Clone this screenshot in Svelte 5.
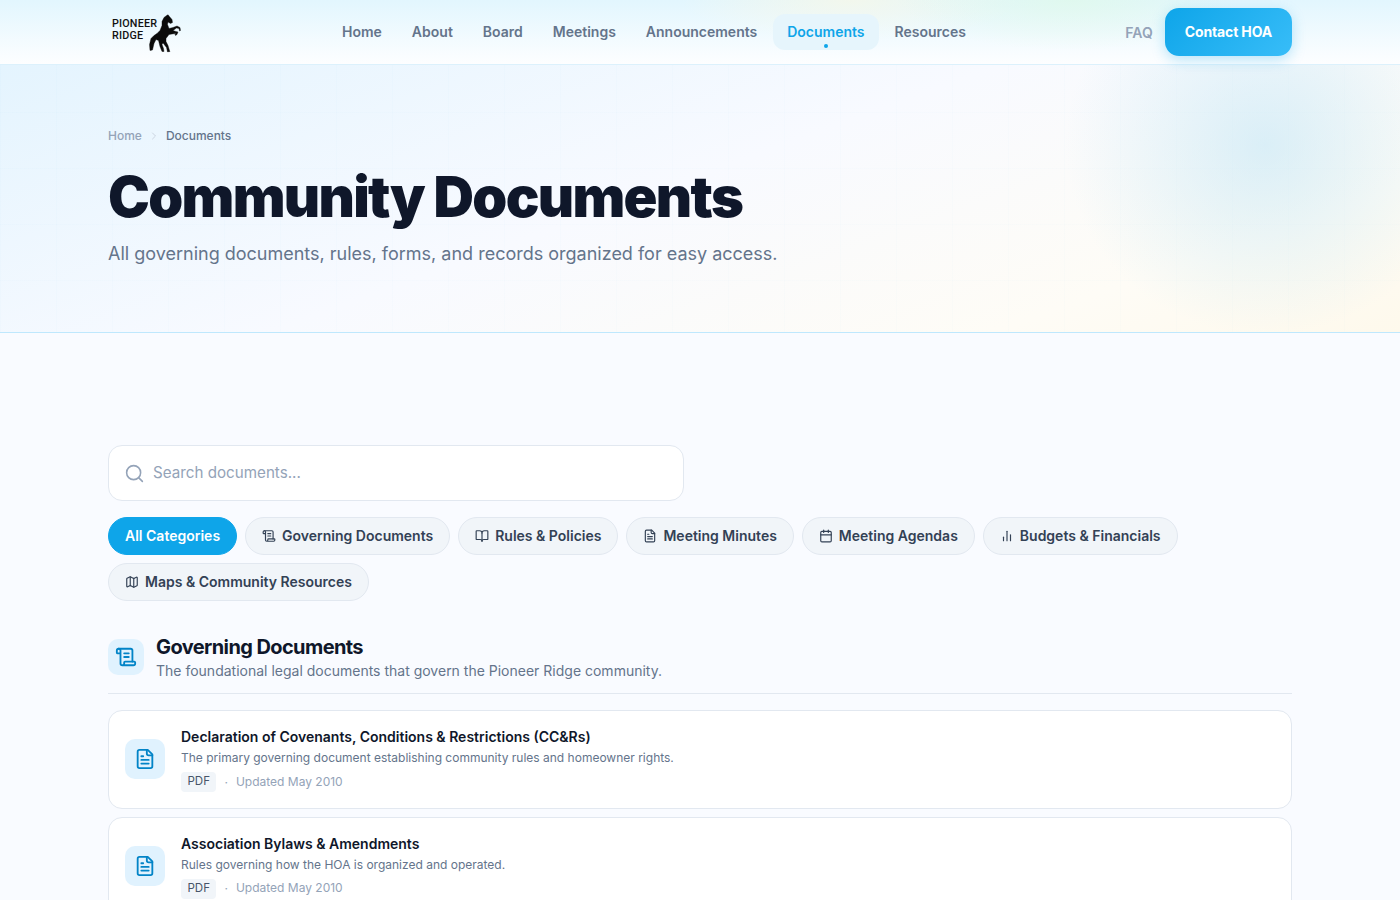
<script>
  const links = ['Home', 'About', 'Board', 'Meetings', 'Announcements', 'Documents', 'Resources'];

  const categories = [
    { label: 'Governing Documents', icon: 'scroll' },
    { label: 'Rules & Policies', icon: 'book' },
    { label: 'Meeting Minutes', icon: 'file' },
    { label: 'Meeting Agendas', icon: 'calendar' },
    { label: 'Budgets & Financials', icon: 'chart' },
    { label: 'Maps & Community Resources', icon: 'map' }
  ];

  const docs = [
    {
      title: 'Declaration of Covenants, Conditions & Restrictions (CC&Rs)',
      desc: 'The primary governing document establishing community rules and homeowner rights.',
      updated: 'Updated May 2010'
    },
    {
      title: 'Association Bylaws & Amendments',
      desc: 'Rules governing how the HOA is organized and operated.',
      updated: 'Updated May 2010'
    }
  ];
</script>

{#snippet icon(name)}
  <svg viewBox="0 0 24 24" fill="none" stroke="currentColor" stroke-width="2" stroke-linecap="round" stroke-linejoin="round">
    {#if name === 'scroll'}
      <path d="M15 12h-5" /><path d="M15 8h-5" />
      <path d="M19 17V5a2 2 0 0 0-2-2H4" />
      <path d="M8 21h12a2 2 0 0 0 2-2v-1a1 1 0 0 0-1-1H11a1 1 0 0 0-1 1v1a2 2 0 1 1-4 0V5a2 2 0 1 0-4 0v2a1 1 0 0 0 1 1h3" />
    {:else if name === 'book'}
      <path d="M12 7v14" />
      <path d="M3 18a1 1 0 0 1-1-1V4a1 1 0 0 1 1-1h5a4 4 0 0 1 4 4 4 4 0 0 1 4-4h5a1 1 0 0 1 1 1v13a1 1 0 0 1-1 1h-6a3 3 0 0 0-3 3 3 3 0 0 0-3-3z" />
    {:else if name === 'file'}
      <path d="M15 2H6a2 2 0 0 0-2 2v16a2 2 0 0 0 2 2h12a2 2 0 0 0 2-2V7Z" />
      <path d="M14 2v4a2 2 0 0 0 2 2h4" />
      <path d="M10 9H8" /><path d="M16 13H8" /><path d="M16 17H8" />
    {:else if name === 'calendar'}
      <path d="M8 2v4" /><path d="M16 2v4" />
      <rect x="3" y="4" width="18" height="18" rx="2" />
      <path d="M3 10h18" />
    {:else if name === 'chart'}
      <path d="M18 20V10" /><path d="M12 20V4" /><path d="M6 20v-6" />
    {:else if name === 'map'}
      <path d="M14.106 5.553a2 2 0 0 0 1.788 0l3.659-1.83A1 1 0 0 1 21 4.619v12.764a1 1 0 0 1-.553.894l-4.553 2.277a2 2 0 0 1-1.788 0l-4.212-2.106a2 2 0 0 0-1.788 0l-3.659 1.83A1 1 0 0 1 3 19.381V6.618a1 1 0 0 1 .553-.894l4.553-2.277a2 2 0 0 1 1.788 0z" />
      <path d="M15 5.764v15" /><path d="M9 3.236v15" />
    {/if}
  </svg>
{/snippet}

<header class="site-header">
  <div class="header-inner">
    <a href="/" class="logo">
      <span class="logo-text"><span>PIONEER</span><span>RIDGE</span></span>
      <svg class="horse" viewBox="0 0 32 38" fill="#0b0b0b" stroke="#0b0b0b" stroke-width="0.4" stroke-linejoin="round">
        <path d="M19 0l1 1.6 3 3.4.5 3-2 1-2.500-1.500-.5 2.500 1.500 4 4-1 4-1.500 3 1.500.5 3-1 .5-.5-2.500-2.500-.5-3.500 2.500 3 1 2 .5-1 2.500-1.500 1-.5-1 1-1-4 .5-3 .5-3 4v3l2 4 1.500 5 .5 1-2.500.5-1-4.500-3.500-4.500-1 1.500 1.500 4 .5 3h-2l-2-5-1.500-6-2.500-1-2 4-1.500 6.500-2.500.5-.5-6 1.500-6 3-3 3-2 3-3 2-5v-4l2-4z" />
      </svg>
    </a>

    <nav class="nav-links">
      {#each links as link}
        <a href="/" class="nav-link" class:active={link === 'Documents'}>{link}</a>
      {/each}
    </nav>

    <div class="nav-right">
      <a href="/" class="faq">FAQ</a>
      <a href="/" class="contact">Contact HOA</a>
    </div>
  </div>
</header>

<section class="hero">
  <div class="container">
    <div class="breadcrumb">
      <a href="/">Home</a>
      <svg viewBox="0 0 24 24" fill="none" stroke="currentColor" stroke-width="2" stroke-linecap="round" stroke-linejoin="round"><path d="m9 18 6-6-6-6" /></svg>
      <span>Documents</span>
    </div>
    <h1>Community Documents</h1>
    <p>All governing documents, rules, forms, and records organized for easy access.</p>
  </div>
</section>

<main class="container content">
  <div class="search">
    <svg viewBox="0 0 24 24" fill="none" stroke="currentColor" stroke-width="1.8" stroke-linecap="round" stroke-linejoin="round"><circle cx="11" cy="11" r="8" /><path d="m21 21-4.3-4.3" /></svg>
    <span>Search documents...</span>
  </div>

  <div class="filters">
    <button class="pill active">All Categories</button>
    {#each categories as cat}
      <button class="pill">{@render icon(cat.icon)}{cat.label}</button>
    {/each}
  </div>

  <div class="section-head">
    <div class="section-icon">{@render icon('scroll')}</div>
    <div>
      <h2>Governing Documents</h2>
      <p>The foundational legal documents that govern the Pioneer Ridge community.</p>
    </div>
  </div>

  <div class="doc-list">
    {#each docs as doc}
      <article class="doc">
        <div class="doc-icon">{@render icon('file')}</div>
        <div>
          <h3>{doc.title}</h3>
          <p>{doc.desc}</p>
          <div class="meta">
            <span class="tag">PDF</span>
            <span class="dot">·</span>
            <span class="updated">{doc.updated}</span>
          </div>
        </div>
      </article>
    {/each}
  </div>
</main>

<style>
  :global(body) {
    margin: 0;
    background: #f9fbff;
    font-family: Inter, "Liberation Sans", sans-serif;
    color: #0f172a;
    height: 900px;
    overflow: hidden;
  }

  a {
    text-decoration: none;
    color: inherit;
  }

  .container {
    width: 1184px;
    margin: 0 auto;
  }

  .site-header {
    height: 64px;
    border-bottom: 1px solid #dcf1fc;
    background:
      radial-gradient(ellipse 170px 50px at 1070px 0, rgba(222, 250, 228, 0.6), transparent),
      radial-gradient(ellipse 170px 40px at 850px 0, rgba(253, 248, 225, 0.6), transparent),
      linear-gradient(180deg, #e2f6fe 0%, #fdfeff 100%);
  }

  .header-inner {
    width: 1184px;
    margin: 0 auto;
    height: 64px;
    display: flex;
    align-items: center;
  }

  .logo {
    display: flex;
    align-items: center;
    padding-left: 4px;
    width: 216px;
  }

  .logo-text {
    font-family: Roboto, "Liberation Sans", sans-serif;
    font-size: 11.7px;
    font-weight: 500;
    letter-spacing: 0.2px;
    color: #111;
    transform: translateY(-3px) scaleX(0.92);
    transform-origin: left;
    width: 37px;
  }

  .logo-text span {
    display: block;
    height: 12px;
    line-height: 12px;
  }

  .horse {
    width: 32px;
    height: 38px;
    transform: translateY(1.5px);
  }

  .nav-links {
    display: flex;
    gap: 2px;
    flex: 1;
  }

  .nav-link {
    position: relative;
    padding: 9px 14px;
    height: 18px;
    line-height: 18px;
    border-radius: 12px;
    font-size: 14px;
    font-weight: 600;
    color: #64748b;
  }

  .nav-link.active {
    color: #0ea5e9;
    background: #e6f5fc;
  }

  .nav-link.active::after {
    content: '';
    position: absolute;
    left: 50%;
    bottom: 2px;
    width: 4px;
    height: 4px;
    margin-left: -2px;
    border-radius: 50%;
    background: #0ea5e9;
  }

  .nav-right {
    display: flex;
    align-items: center;
    gap: 12px;
  }

  .faq {
    font-size: 14px;
    font-weight: 600;
    color: #94a3b8;
  }

  .contact {
    padding: 15px 20px;
    line-height: 18px;
    border-radius: 14px;
    font-size: 14px;
    font-weight: 700;
    letter-spacing: -0.01em;
    color: #fff;
    background: linear-gradient(135deg, #0ea5e9, #38bdf8);
    box-shadow: 0 4px 14px rgba(14, 165, 233, 0.28);
  }

  .hero {
    height: 268px;
    box-sizing: border-box;
    padding-top: 62px;
    border-bottom: 1px solid #bfe8fd;
    background:
      radial-gradient(ellipse 200px 190px at 1265px 80px, rgba(190, 228, 245, 0.55), transparent),
      linear-gradient(90deg, rgba(14, 165, 233, 0.012) 1px, transparent 1px) 0 0 / 56px 56px,
      linear-gradient(180deg, rgba(14, 165, 233, 0.012) 1px, transparent 1px) 0 -9px / 56px 56px,
      linear-gradient(160deg, #e4f4fe 0%, #f8faff 47%, #fefcf6 81%, #fef9ec 100%);
  }

  .breadcrumb {
    display: flex;
    align-items: center;
    gap: 6px;
    font-size: 12px;
    font-weight: 500;
    line-height: 18px;
    color: #64748b;
  }

  .breadcrumb a {
    color: #94a3b8;
  }

  .breadcrumb svg {
    width: 12px;
    height: 12px;
    color: #cbd5e1;
  }

  h1 {
    margin: 21px 0 0;
    font-size: 56px;
    line-height: 62px;
    font-weight: 900;
    letter-spacing: -0.03em;
    color: #0f172a;
  }

  .hero p {
    margin: 12px 0 0;
    font-size: 18px;
    line-height: 28px;
    color: #64748b;
  }

  .content {
    padding-top: 112px;
  }

  .search {
    width: 576px;
    height: 56px;
    box-sizing: border-box;
    display: flex;
    align-items: center;
    gap: 8px;
    padding: 0 15px;
    background: #fff;
    border: 1px solid #e2e8f0;
    border-radius: 14px;
    font-size: 15.2px;
    color: #94a3b8;
  }

  .search span {
    padding-bottom: 2px;
  }

  .search svg {
    width: 21px;
    height: 21px;
  }

  .filters {
    display: flex;
    flex-wrap: wrap;
    gap: 8px;
    margin-top: 16px;
  }

  .pill {
    display: flex;
    align-items: center;
    gap: 6px;
    height: 38px;
    box-sizing: border-box;
    padding: 0 16px 2px;
    border: 1px solid #e2e8f0;
    border-radius: 999px;
    background: #f1f5f9;
    font-family: inherit;
    font-size: 14px;
    font-weight: 600;
    color: #334155;
  }

  .pill svg {
    width: 14px;
    height: 14px;
    margin-top: 2px;
  }

  .pill.active {
    background: #0ea5e9;
    border-color: #0ea5e9;
    color: #fff;
  }

  .section-head {
    display: flex;
    align-items: flex-start;
    gap: 12px;
    margin-top: 32px;
    padding-bottom: 12px;
    border-bottom: 1px solid #e2e8f0;
  }

  .section-icon {
    width: 36px;
    height: 36px;
    margin-top: 6px;
    display: flex;
    align-items: center;
    justify-content: center;
    border-radius: 10px;
    background: #e0f2fe;
    color: #0284c7;
  }

  .section-icon svg {
    width: 22px;
    height: 22px;
  }

  h2 {
    margin: 0;
    font-size: 20px;
    line-height: 28px;
    font-weight: 700;
    letter-spacing: -0.03em;
  }

  .section-head p {
    margin: 0;
    font-size: 14px;
    line-height: 20px;
    color: #64748b;
  }

  .doc-list {
    display: flex;
    flex-direction: column;
    gap: 8px;
    margin-top: 16px;
  }

  .doc {
    display: flex;
    align-items: center;
    gap: 16px;
    padding: 16px;
    background: #fff;
    border: 1px solid #e2e8f0;
    border-radius: 14px;
  }

  .doc-icon {
    width: 40px;
    height: 40px;
    flex-shrink: 0;
    display: flex;
    align-items: center;
    justify-content: center;
    border-radius: 10px;
    background: #e0f2fe;
    color: #0284c7;
  }

  .doc-icon svg {
    width: 22px;
    height: 22px;
  }

  h3 {
    margin: 0;
    font-size: 14px;
    line-height: 20px;
    font-weight: 600;
    color: #0f172a;
  }

  .doc p {
    margin: 2px 0 0;
    font-size: 12px;
    line-height: 18px;
    color: #64748b;
  }

  .meta {
    display: flex;
    align-items: center;
    gap: 8px;
    margin-top: 5.25px;
    font-size: 12px;
    color: #94a3b8;
  }

  .updated {
    padding-bottom: 2px;
  }

  .tag {
    padding: 2px 6.5px;
    line-height: 15.5px;
    border-radius: 4px;
    background: #f1f5f9;
    font-size: 11.52px;
    color: #475569;
  }
</style>
